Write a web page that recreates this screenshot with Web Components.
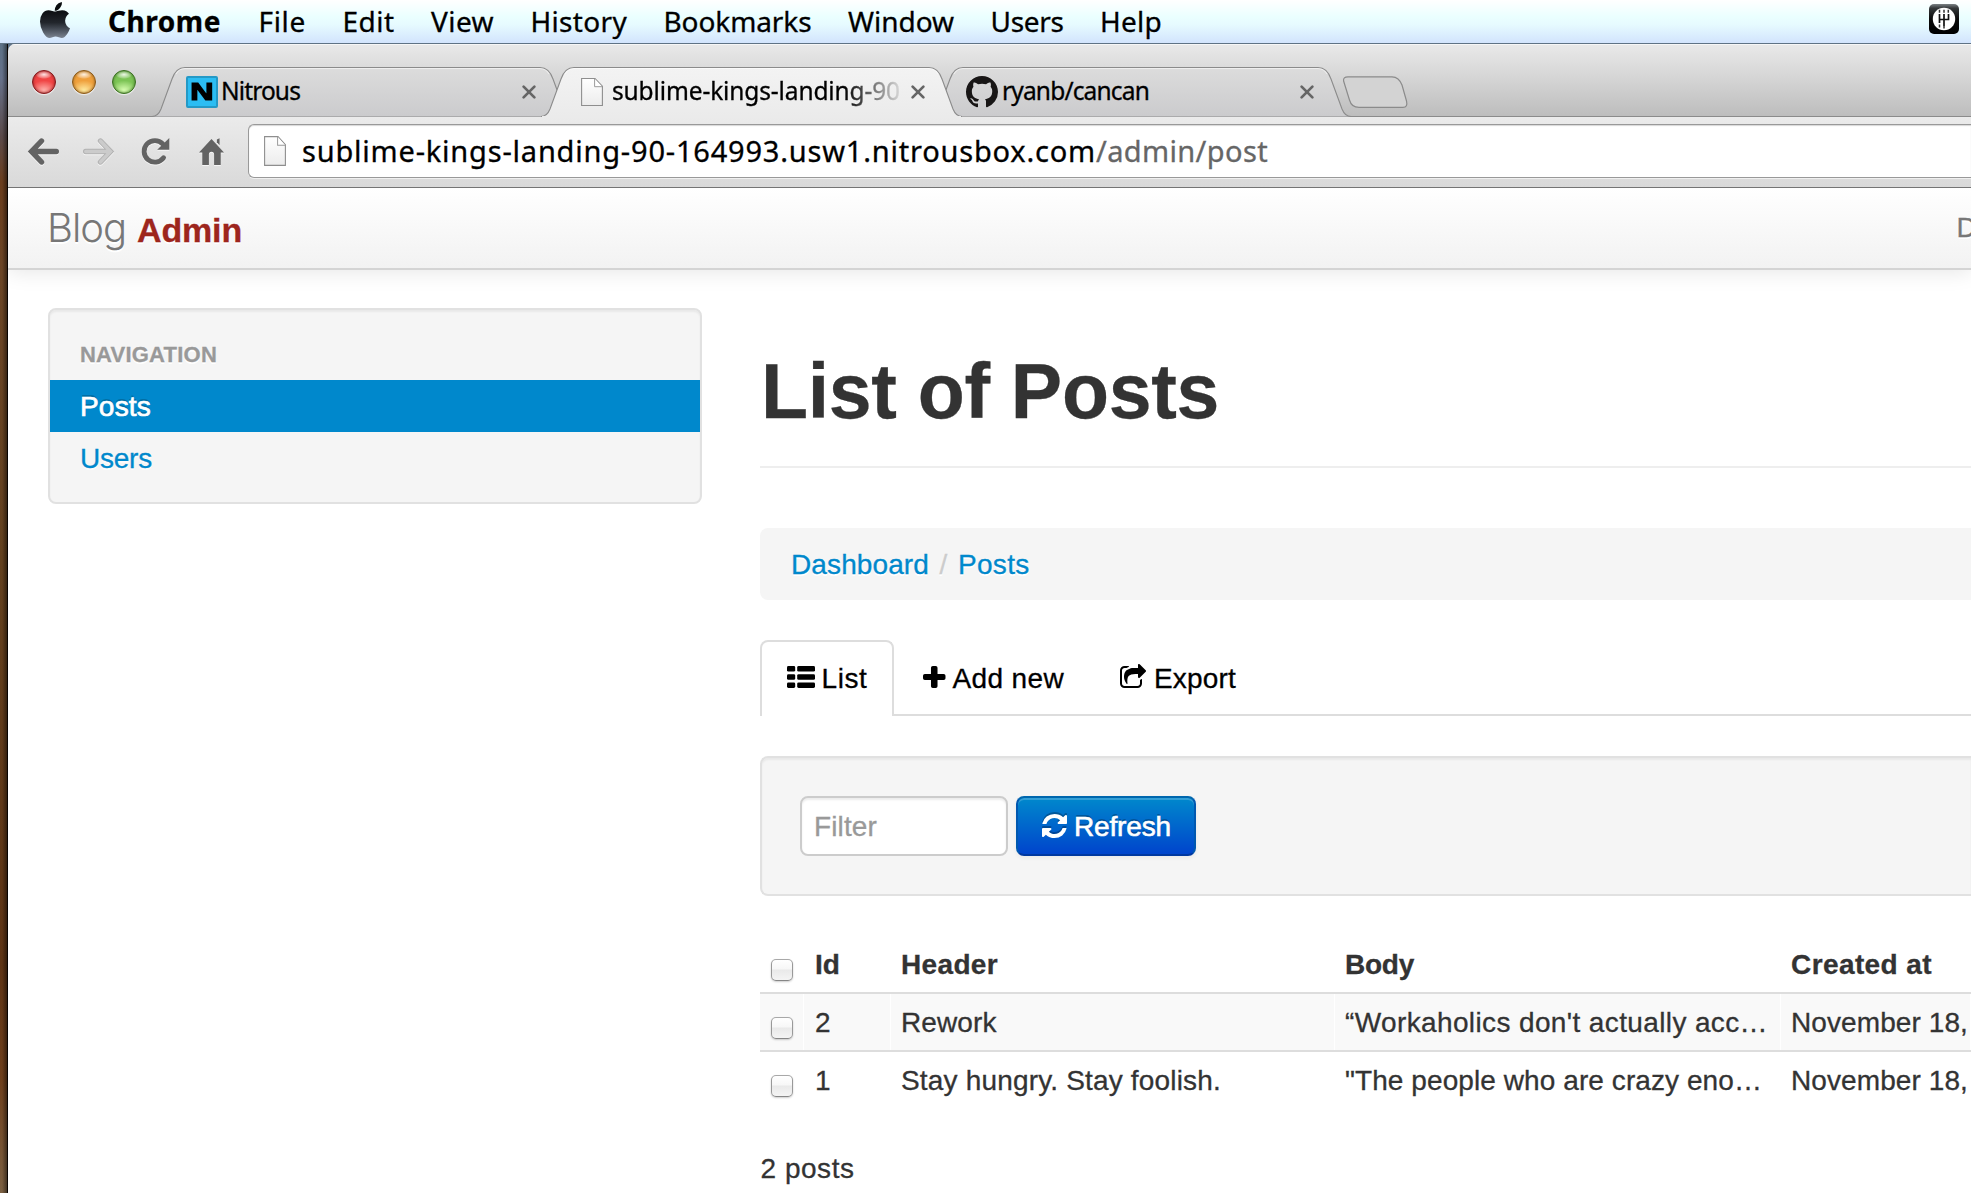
<!DOCTYPE html>
<html lang="en">
<head>
<meta charset="utf-8">
<title>Blog Admin</title>
<style>
html,body{margin:0;height:1193px;overflow:hidden;background:#fff}
body{font-family:"Liberation Sans",Arial,sans-serif;font-size:28px;color:#333;-webkit-text-stroke-width:.3px}
</style>
</head>
<body>
<admin-desktop></admin-desktop>
<script>
const define = (name, html, setup) => customElements.define(name, class extends HTMLElement {
  constructor() {
    super();
    this.attachShadow({ mode: 'open' }).innerHTML = typeof html === 'function' ? '' : html;
  }
  connectedCallback() {
    if (typeof html === 'function') this.shadowRoot.innerHTML = html(this);
    if (setup) setup(this);
  }
});

/* Text run whose tracking is tuned so that its advance equals the "w" attribute. */
define('fit-text', `<style>:host{display:inline-block;white-space:pre}span{display:inline-block;white-space:pre}</style><span><slot></slot></span>`, el => {
  const w = parseFloat(el.getAttribute('w'));
  if (!w) return;
  const span = el.shadowRoot.querySelector('span');
  const n = el.textContent.length;
  const natural = span.getBoundingClientRect().width;
  el.style.letterSpacing = ((w - natural) / n).toFixed(3) + 'px';
  el.style.width = w + 'px';
});

const icons = {
  apple: ['0 0 1393 1664', `<defs><linearGradient id="a" x1="0" y1="0" x2="0" y2="1"><stop offset="0" stop-color="#0b0d10"/><stop offset=".45" stop-color="#22262c"/><stop offset=".62" stop-color="#3c424b"/><stop offset="1" stop-color="#7c8490"/></linearGradient></defs><path fill="url(#a)" d="M1393 1215q-39 125-123 250-129 196-257 196-49 0-140-32-86-32-151-32-61 0-142 33-81 34-132 34-152 0-301-259Q0 1144 0 902q0-228 113-374 113-144 284-144 72 0 177 30 104 30 138 30 45 0 143-34 102-34 173-34 119 0 213 65 52 36 104 100-79 67-114 118-65 94-65 207 0 124 69 223t158 126z"/><path fill="#0b0d10" d="M1017 42q0 61-29 136-30 75-93 138-54 54-108 72-37 11-104 17 3-149 78-257 74-107 250-148 1 3 2.5 11t2.5 11q0 4 .5 10t.5 10z"/>`],
  gear: ['0 0 30 30', `<defs><linearGradient id="g" x1="0" y1="0" x2="0" y2="1"><stop offset="0" stop-color="#7b8184"/><stop offset=".14" stop-color="#34383a"/><stop offset=".5" stop-color="#0a0a0a"/><stop offset="1" stop-color="#000"/></linearGradient></defs><rect width="30" height="30" rx="5" fill="url(#g)"/><circle cx="15" cy="15" r="11.2" fill="#fff"/><path d="M10.5 10v5.5h9V10M15 10v12M10.5 15v4" fill="none" stroke="#111" stroke-width="1.7"/><path d="M10.5 5.8v3M15 5.8v3M19.3 5.8v3M10.5 20.6v2.8M15 22v2.4" stroke="#333" stroke-width="1.5"/>`],
  close: ['0 0 14 14', `<path d="M1.6 1.6l10.8 10.8M12.4 1.6L1.6 12.4" stroke="#666" stroke-width="2.7" stroke-linecap="round"/>`],
  page: ['0 0 22 30', `<defs><linearGradient id="p" x1="0" y1="0" x2="0" y2="1"><stop offset="0" stop-color="#fff"/><stop offset="1" stop-color="#ececec"/></linearGradient></defs><path d="M.6.6H14L21.4 8.5V28.4H.6z" fill="url(#p)" stroke="#8e8e8e" stroke-width="1.1"/><path d="M13.6.8V9H21.2" fill="#fff" stroke="#999" stroke-width="1"/>`],
  github: ['0 0 16 16', `<path fill="#181616" d="M8 0C3.58 0 0 3.58 0 8c0 3.54 2.29 6.53 5.47 7.59.4.07.55-.17.55-.38 0-.19-.01-.82-.01-1.49-2.01.37-2.53-.49-2.69-.94-.09-.23-.48-.94-.82-1.13-.28-.15-.68-.52-.01-.53.63-.01 1.08.58 1.23.82.72 1.21 1.87.87 2.33.66.07-.52.28-.87.51-1.07-1.78-.2-3.64-.89-3.64-3.95 0-.87.31-1.59.82-2.15-.08-.2-.36-1.02.08-2.12 0 0 .67-.21 2.2.82.64-.18 1.32-.27 2-.27s1.36.09 2 .27c1.53-1.04 2.2-.82 2.2-.82.44 1.1.16 1.92.08 2.12.51.56.82 1.27.82 2.15 0 3.07-1.87 3.75-3.65 3.95.29.25.54.73.54 1.48 0 1.07-.01 1.93-.01 2.2 0 .21.15.46.55.38A8.01 8.01 0 0 0 16 8c0-4.42-3.58-8-8-8z"/>`],
  back: ['0 0 31 27', `<path d="M13.5 3L3.5 13.5 13.5 24M4 13.5H28.3" fill="none" stroke="#636363" stroke-width="5.4" stroke-linecap="round" stroke-linejoin="miter"/>`],
  forward: ['0 0 31 27', `<path d="M17.5 3L27.5 13.5 17.5 24M27 13.5H2.7" fill="none" stroke="#b2b2b2" stroke-width="5.4" stroke-linecap="round"/><path d="M17.5 3L27.5 13.5 17.5 24M27 13.5H2.7" fill="none" stroke="#cbcbcb" stroke-width="3.4" stroke-linecap="round"/>`],
  reload: ['0 0 28 27', `<path d="M21.6 19.8A10.8 10.8 0 1 1 20.8 6" fill="none" stroke="#636363" stroke-width="4.8" stroke-linecap="round"/><path d="M27.3 0V11.8H15.2z" fill="#636363"/>`],
  home: ['0 0 26 27', `<path d="M13 1L0 14.6H3.4V27H10.3V16.5a2.7 2.7 0 0 1 5.4 0V27H22.6V14.6H26z" fill="#636363"/><path d="M18.6 1.6l2.8-1.3V7.2l-2.8-3z" fill="#636363"/>`],
  list: ['0 0 28 22', `<rect width="8.2" height="5.6" rx="1.4"/><rect x="10.2" width="17.8" height="5.6" rx="1.4"/><rect y="8.2" width="8.2" height="5.6" rx="1.4"/><rect x="10.2" y="8.2" width="17.8" height="5.6" rx="1.4"/><rect y="16.4" width="8.2" height="5.6" rx="1.4"/><rect x="10.2" y="16.4" width="17.8" height="5.6" rx="1.4"/>`],
  plus: ['0 0 22 22', `<path d="M9.6 0h2.8q1.8 0 1.8 1.8V7.9h6q1.8 0 1.8 1.8v2.6q0 1.8-1.8 1.8h-6v6.1q0 1.8-1.8 1.8H9.6q-1.8 0-1.8-1.8V14.1h-6Q0 14.1 0 12.3V9.7Q0 7.9 1.8 7.9h6V1.8Q7.8 0 9.6 0z"/>`],
  share: ['0 0 1664 1536', `<path d="M1408 989v259q0 119-84.5 203.5T1120 1536H288q-119 0-203.5-84.5T0 1248V416q0-119 84.5-203.5T288 128h255q13 0 22.5 9.5T575 160q0 27-26 32-77 26-133 60-10 4-16 4H288q-66 0-113 47t-47 113v832q0 66 47 113t113 47h832q66 0 113-47t47-113v-214q0-19 18-29 28-13 54-37 16-16 35-8 21 9 21 29zm237-496l-384 384q-18 19-45 19-12 0-25-5-39-17-39-59V640H992q-323 0-438 131-119 137-74 473 3 23-20 34-8 2-12 2-16 0-26-13-10-14-21-31t-39.5-68.5T312 1068t-38.5-114T256 832q0-49 3.5-91t14-90 28-88 47-81.5 68.5-74T507 350t112.5-54T764 262.5 944 256h208V64q0-42 39-59 13-5 25-5 26 0 45 19l384 384q19 19 19 45t-19 45z"/>`],
  refresh: ['0 0 1536 1536', `<path d="M1511 928q0 5-1 7-64 268-268 434.5T764 1536q-146 0-282.5-55T238 1324l-129 129q-19 19-45 19t-45-19-19-45V960q0-26 19-45t45-19h448q26 0 45 19t19 45-19 45l-137 137q71 66 161 102t187 36q134 0 250-65t186-179q11-17 53-117 8-23 30-23h192q13 0 22.5 9.5t9.5 22.5zm25-800v448q0 26-19 45t-45 19h-448q-26 0-45-19t-19-45 19-45l138-138Q969 256 768 256q-134 0-250 65T332 500q-11 17-53 117-8 23-30 23H50q-13 0-22.5-9.5T18 608v-7q65-268 270-434.5T768 0q146 0 284 55.5T1297 212l130-129q19-19 45-19t45 19 19 45z"/>`]
};
define('ui-icon', el => {
  const [box, body] = icons[el.getAttribute('name')];
  return `<style>:host{display:block;flex:none}svg{display:block;width:100%;height:100%;overflow:visible;fill:currentColor}</style><svg viewBox="${box}" preserveAspectRatio="none">${body}</svg>`;
});

define('nitrous-mark', `<style>:host{display:block;flex:none;box-sizing:border-box;width:32px;height:32px;border:2px solid #2499c6;border-radius:2px;background:#2bbdf3;overflow:hidden}
span{display:block;font:bold 23px/28px "Liberation Sans",Arial,sans-serif;text-align:center;color:#000;-webkit-text-stroke:1.2px #000;transform:scaleX(1.4)}</style><span>N</span>`);

define('mac-menubar', `<style>
:host{display:flex;box-sizing:border-box;width:1971px;height:44px;padding-left:40px;border-bottom:1px solid #5f7385;background:linear-gradient(#fff 0,#eaffff 40%,#e6faff 58%,#d2e4fd 100%);font:28px/42px "Noto Sans","Open Sans",sans-serif;color:#000}
.logo{width:30px;height:36px;margin-top:2px}
fit-text{margin-left:36.5px}
b{margin:0 1px 0 38px;font-weight:700}b fit-text{margin:0}
.gear{width:30px;height:30px;margin:4px 12px 0 auto}
</style>
<ui-icon class="logo" name="apple"></ui-icon>
<b><fit-text w="113">Chrome</fit-text></b>
<fit-text w="47.5">File</fit-text><fit-text w="52">Edit</fit-text><fit-text w="63">View</fit-text><fit-text w="96.5">History</fit-text><fit-text w="148">Bookmarks</fit-text><fit-text w="106">Window</fit-text><fit-text w="73">Users</fit-text><fit-text w="62">Help</fit-text>
<ui-icon class="gear" name="gear"></ui-icon>`);

define('traffic-lights', `<style>:host{display:flex;gap:16px;padding:26px 0 0 24px}
i{box-sizing:border-box;width:24px;height:24px;border-radius:50%;border:1.5px solid var(--e);background:radial-gradient(ellipse 38% 20% at 50% 16%,rgba(255,255,255,.85),rgba(255,255,255,.25) 80%,transparent),radial-gradient(ellipse 60% 45% at 50% 88%,var(--l),transparent),var(--c);box-shadow:0 1px 1px rgba(255,255,255,.7),inset 0 0 3px var(--e)}
</style><i style="--c:#f04545;--e:#7e1a1c;--l:#ffb4ae"></i><i style="--c:#efa03c;--e:#85571a;--l:#ffeba0"></i><i style="--c:#7cc455;--e:#3a6c22;--l:#dbffb4"></i>`);

define('chrome-tab', el => {
  const on = el.hasAttribute('active');
  return `<style>
:host{display:grid;flex:none;width:421px;height:50px;margin-right:-32px;position:relative;z-index:${on ? 3 : 1}}
svg,.row{grid-area:1/1}
svg{display:block;overflow:visible}
.row{display:flex;align-items:center;padding-left:34px;height:50px}
.text{flex:1;display:flex;line-height:48px}
::slotted(fit-text){font:24.5px/48px "Noto Sans","Open Sans",sans-serif;color:#000;height:50px}
.x{width:14px;height:14px;margin-right:37px}
${on ? '.text{-webkit-mask-image:linear-gradient(90deg,#000 232px,transparent 294px)}' : ''}
</style>
<svg width="421" height="50"><defs><linearGradient id="t" x1="0" y1="0" x2="0" y2="1"><stop offset="0" stop-color="${on ? '#f3f3f3' : '#dcdcdc'}"/><stop offset="1" stop-color="${on ? '#ebebeb' : '#cbcbcd'}"/></linearGradient></defs>
<path d="M0 49.5Q6 49.5 9 42L20 12Q24 .5 33 .5H388Q397 .5 401 12L412 42Q415 49.5 421 49.5" fill="url(#t)" stroke="#8b8b8b" stroke-width="1.1"/>
<path d="M24 7Q27 1.6 33 1.6H388Q394 1.6 397 7" fill="none" stroke="#fff" stroke-opacity=".6"/>
${on ? '<rect x="1" y="49" width="419" height="2" fill="#ebebeb"/>' : ''}</svg>
<div class="row"><slot name="icon"></slot><div class="text"><slot></slot></div><ui-icon class="x" name="close"></ui-icon></div>`;
});

define('tab-strip', `<style>
:host{display:flex;box-sizing:border-box;height:73px;border-bottom:1px solid #8b8b8b;background:linear-gradient(#e9e9e9,#d6d6d6 45%,#bdbdbd);box-shadow:inset 0 1px #f7f7f7}
.tabs{display:flex;margin:23px 0 0 16px}
.page{width:22px;height:29px;margin:0 9px 0 6px}.gh{width:32px;height:32px;margin:0 4px 0 2px}nitrous-mark{margin-right:3px}
.new{display:block;margin:32px 0 0 23px}
</style>
<traffic-lights></traffic-lights>
<div class="tabs">
<chrome-tab><nitrous-mark slot="icon"></nitrous-mark><fit-text w="79">Nitrous</fit-text></chrome-tab>
<chrome-tab active><ui-icon slot="icon" class="page" name="page"></ui-icon><fit-text w="288">sublime-kings-landing-90</fit-text></chrome-tab>
<chrome-tab><ui-icon slot="icon" class="gh" name="github"></ui-icon><fit-text w="147">ryanb/cancan</fit-text></chrome-tab>
</div>
<svg class="new" width="66" height="32" overflow="visible"><path d="M6 .8H50Q57 1 60 9L64.5 25Q66 31.4 61 31.4H17Q9.500 31.400 7.500 24L1.600 5Q1 .8 6 .8z" fill="#d3d3d3" stroke="#8b8b8b" stroke-width="1.2"/></svg>`);

define('nav-toolbar', `<style>
:host{display:flex;align-items:flex-start;box-sizing:border-box;height:71px;border-bottom:1px solid #747474;background:linear-gradient(#ebebeb,#d9d9d9);padding:7px 0 0 20px}
ui-icon{margin-top:14px;filter:drop-shadow(0 1px 0 rgba(255,255,255,.7))}
.a{width:31px;height:27px;margin-right:24px}.r{width:28px;height:27px;margin:14px 29px 0 4px}.h{width:25px;height:27px}
.omni{box-sizing:border-box;flex:1;display:flex;height:54px;margin-left:24px;border:1px solid #999;border-right:0;border-radius:6px 0 0 6px;background:#fff;box-shadow:inset 0 1px 1px #d8d8d8,0 1px #f0f0f0;font:29px/52px "Noto Sans","Open Sans",sans-serif;color:#000}
.p{width:22px;height:31px;margin:11px 0 0 15px;filter:none}
.u{margin-left:16px;white-space:nowrap}.u fit-text+fit-text{color:#666}
</style>
<ui-icon class="a" name="back"></ui-icon><ui-icon class="a" name="forward"></ui-icon><ui-icon class="r" name="reload"></ui-icon><ui-icon class="h" name="home"></ui-icon>
<div class="omni"><ui-icon class="p" name="page"></ui-icon><div class="u"><fit-text w="794">sublime-kings-landing-90-164993.usw1.nitrousbox.com</fit-text><fit-text w="172">/admin/post</fit-text></div></div>`);

define('admin-navbar', `<style>
:host{display:flex;justify-content:space-between;box-sizing:border-box;height:82px;padding-left:39px;border-bottom:2px solid #d4d4d4;background:linear-gradient(#fff,#f2f2f2);box-shadow:0 2px 20px rgba(0,0,0,.1);line-height:80px;color:#777;text-shadow:0 2px 0 #fff}
.brand{padding-top:2px;font-size:34px;white-space:nowrap;height:78px}
.thin{font:300 40px/40px Inter,Roboto,sans-serif;-webkit-text-stroke-width:0}
b{color:#9d261d;margin-left:11px;display:inline-block}
.link{width:15px;overflow:hidden;white-space:nowrap;margin-right:-.5px}
</style>
<div class="brand"><fit-text class="thin" w="79">Blog</fit-text><b><fit-text w="105">Admin</fit-text></b></div><div class="link">D</div>`);

define('side-nav', `<style>
:host{display:block;flex:none;box-sizing:border-box;width:654px;height:196px;margin-top:38px;padding:24px 0 0;border:2px solid #e1e1e1;border-radius:8px;background:#f5f5f5;box-shadow:inset 0 2px 2px rgba(0,0,0,.05)}
h6{margin:0 0 4px;padding-left:30px;font-size:22px;line-height:42px;color:#999;text-shadow:0 2px 0 #fff}
a{display:block;padding-left:30px;line-height:54px;height:52px;color:#08c;text-shadow:0 2px 0 rgba(255,255,255,.7)}
a.on{background:#08c;color:#fff;text-shadow:0 -2px 0 rgba(0,0,0,.2);-webkit-text-stroke:.7px #fff}
</style><h6><fit-text w="137">NAVIGATION</fit-text></h6><a class="on"><fit-text w="71">Posts</fit-text></a><a><fit-text w="72">Users</fit-text></a>`);

define('page-header', `<style>:host{display:block;box-sizing:border-box;padding:81px 0 35px 1px;border-bottom:2px solid #eee}h1{margin:0;font-size:77px;line-height:80px;height:80px;font-weight:700}</style><h1><fit-text w="458">List of Posts</fit-text></h1>`);

define('bread-crumb', `<style>:host{display:flex;height:72px;margin-top:60px;padding-left:31px;border-radius:8px 0 0 8px;background:#f5f5f5;line-height:74px;text-shadow:0 2px 0 #fff}a{color:#08c}i{font-style:normal;color:#ccc;width:29px;text-align:center}</style>
<a><fit-text w="138">Dashboard</fit-text></a><i>/</i><a><fit-text w="71.500">Posts</fit-text></a>`);

define('tab-link', `<style>
:host{display:flex;box-sizing:border-box;height:76px;border:2px solid transparent;border-bottom:0;border-radius:8px 8px 0 0;padding:0 24px 0 25px;line-height:74px;color:#000}
:host([active]){border-color:#ddd;background:#fff}
</style><slot name="icon"></slot><slot></slot>`);

define('nav-tabs', `<style>:host{display:flex;box-sizing:border-box;height:76px;margin-top:40px;background:linear-gradient(#ddd,#ddd) 0 100%/100% 2px no-repeat}
tab-link{margin-right:4px}.l{width:28px;height:22px;margin:24px 7px 0 -.5px}.p{width:22.5px;height:22px;margin:24px 7px 0 0}.s{width:26px;height:24px;margin:22px 8px 0 0}
</style>
<tab-link active style="width:134px"><ui-icon slot="icon" class="l" name="list"></ui-icon><fit-text w="46">List</fit-text></tab-link>
<tab-link style="width:192px;padding-left:23px"><ui-icon slot="icon" class="p" name="plus"></ui-icon><fit-text w="111.500">Add new</fit-text></tab-link>
<tab-link style="padding-left:24px"><ui-icon slot="icon" class="s" name="share"></ui-icon><fit-text w="82">Export</fit-text></tab-link>`);

define('filter-bar', `<style>
:host{display:flex;gap:8px;box-sizing:border-box;height:140px;margin-top:40px;padding:38px;border:2px solid #e1e1e1;border-right:0;border-radius:8px 0 0 8px;background:#f5f5f5;box-shadow:inset 0 2px 2px rgba(0,0,0,.05)}
.in{box-sizing:border-box;width:208px;height:60px;padding-left:12px;border:2px solid #ccc;border-radius:8px;background:#fff;box-shadow:inset 0 2px 2px rgba(0,0,0,.075);line-height:57px;color:#999}
.btn{box-sizing:border-box;display:flex;width:180px;height:60px;padding-left:24px;border:2px solid;border-color:#0067ae #0058b0 #0038a0;border-radius:8px;background:linear-gradient(#08c,#04c);box-shadow:inset 0 2px 0 rgba(255,255,255,.2),0 2px 4px rgba(0,0,0,.05);line-height:57px;color:#fff;text-shadow:0 -2px 0 rgba(0,0,0,.25);-webkit-text-stroke:.6px #fff}
ui-icon{width:25px;height:24px;margin:16px 7px 0 0;filter:drop-shadow(0 -2px 0 rgba(0,0,0,.25));-webkit-text-stroke:0}
</style><div class="in"><fit-text w="63">Filter</fit-text></div><div class="btn"><ui-icon name="refresh"></ui-icon><fit-text w="97">Refresh</fit-text></div>`);

define('check-box', `<style>:host{display:block;box-sizing:border-box;width:22px;height:22px;border:1.5px solid #999;border-color:#a8a8a8 #999 #868686;border-radius:5px;background:linear-gradient(#fff,#f7f7f7 45%,#e9e9e9 50%,#f4f4f4);box-shadow:0 1px 2px rgba(0,0,0,.2)}</style>`);

define('post-row', `<style>
:host{display:grid;grid-template-columns:44px 87px 444px 446px 1fr;grid-template-rows:56px;height:56px;border-top:2px solid #ddd;line-height:58px;white-space:nowrap;overflow:hidden}
:host([head]){border-top:0;font-weight:700}
div{padding-left:10px;overflow:hidden}
.id{padding-left:11px}
:host([striped]) div{background:#f9f9f9;border-right:1px solid #fff}
check-box{margin:23px 0 0 1px}
</style><div><check-box></check-box></div><div class="id"><slot name="id"></slot></div><div><slot name="header"></slot></div><div><slot name="body"></slot></div><div><slot name="created"></slot></div>`);

define('post-table', `<style>:host{display:block;margin-top:40px}p{margin:40px 0 0 .5px;line-height:41px}</style>
<post-row head><span slot="id">Id</span><fit-text slot="header" w="97">Header</fit-text><fit-text slot="body" w="69">Body</fit-text><fit-text slot="created" w="141">Created at</fit-text></post-row>
<post-row striped><span slot="id">2</span><fit-text slot="header" w="95.500">Rework</fit-text><fit-text slot="body" w="423">“Workaholics don't actually acc…</fit-text><fit-text slot="created" w="177">November 18,</fit-text></post-row>
<post-row><span slot="id">1</span><fit-text slot="header" w="320">Stay hungry. Stay foolish.</fit-text><fit-text slot="body" w="417">"The people who are crazy eno…</fit-text><fit-text slot="created" w="177">November 18,</fit-text></post-row>
<p><fit-text w="94">2 posts</fit-text></p>`);

define('admin-page', `<style>:host{display:block;height:1005px;background:#fff;overflow:hidden}.cols{display:flex;padding-left:40px}main{flex:1;min-width:0;margin-left:58px}</style>
<admin-navbar></admin-navbar><div class="cols"><side-nav></side-nav><main><page-header></page-header><bread-crumb></bread-crumb><nav-tabs></nav-tabs><filter-bar></filter-bar><post-table></post-table></main></div>`);

define('browser-window', `<style>:host{display:block;flex:1;min-width:0;border-radius:7px 0 0 0;overflow:hidden}</style><tab-strip></tab-strip><nav-toolbar></nav-toolbar><admin-page></admin-page>`);

define('admin-desktop', `<style>:host{display:block;width:1971px;height:1193px;overflow:hidden}
.wall{display:flex;padding-left:8px;height:1149px;background:linear-gradient(90deg,transparent 2px,rgba(0,0,0,.45) 7px,#0a0502 7px,#0a0502 8px,transparent 8px) 0 0/8px 100% no-repeat,linear-gradient(#5d7186 0,#66718a 3%,#5a4a4a 8%,#6a3d1d 12%,#6b4526 20%,#63411f 45%,#5e3415 80%,#6e3f1c 90%,#7b6042 100%)}
</style><mac-menubar></mac-menubar><div class="wall"><browser-window></browser-window></div>`);
</script>
</body>
</html>
